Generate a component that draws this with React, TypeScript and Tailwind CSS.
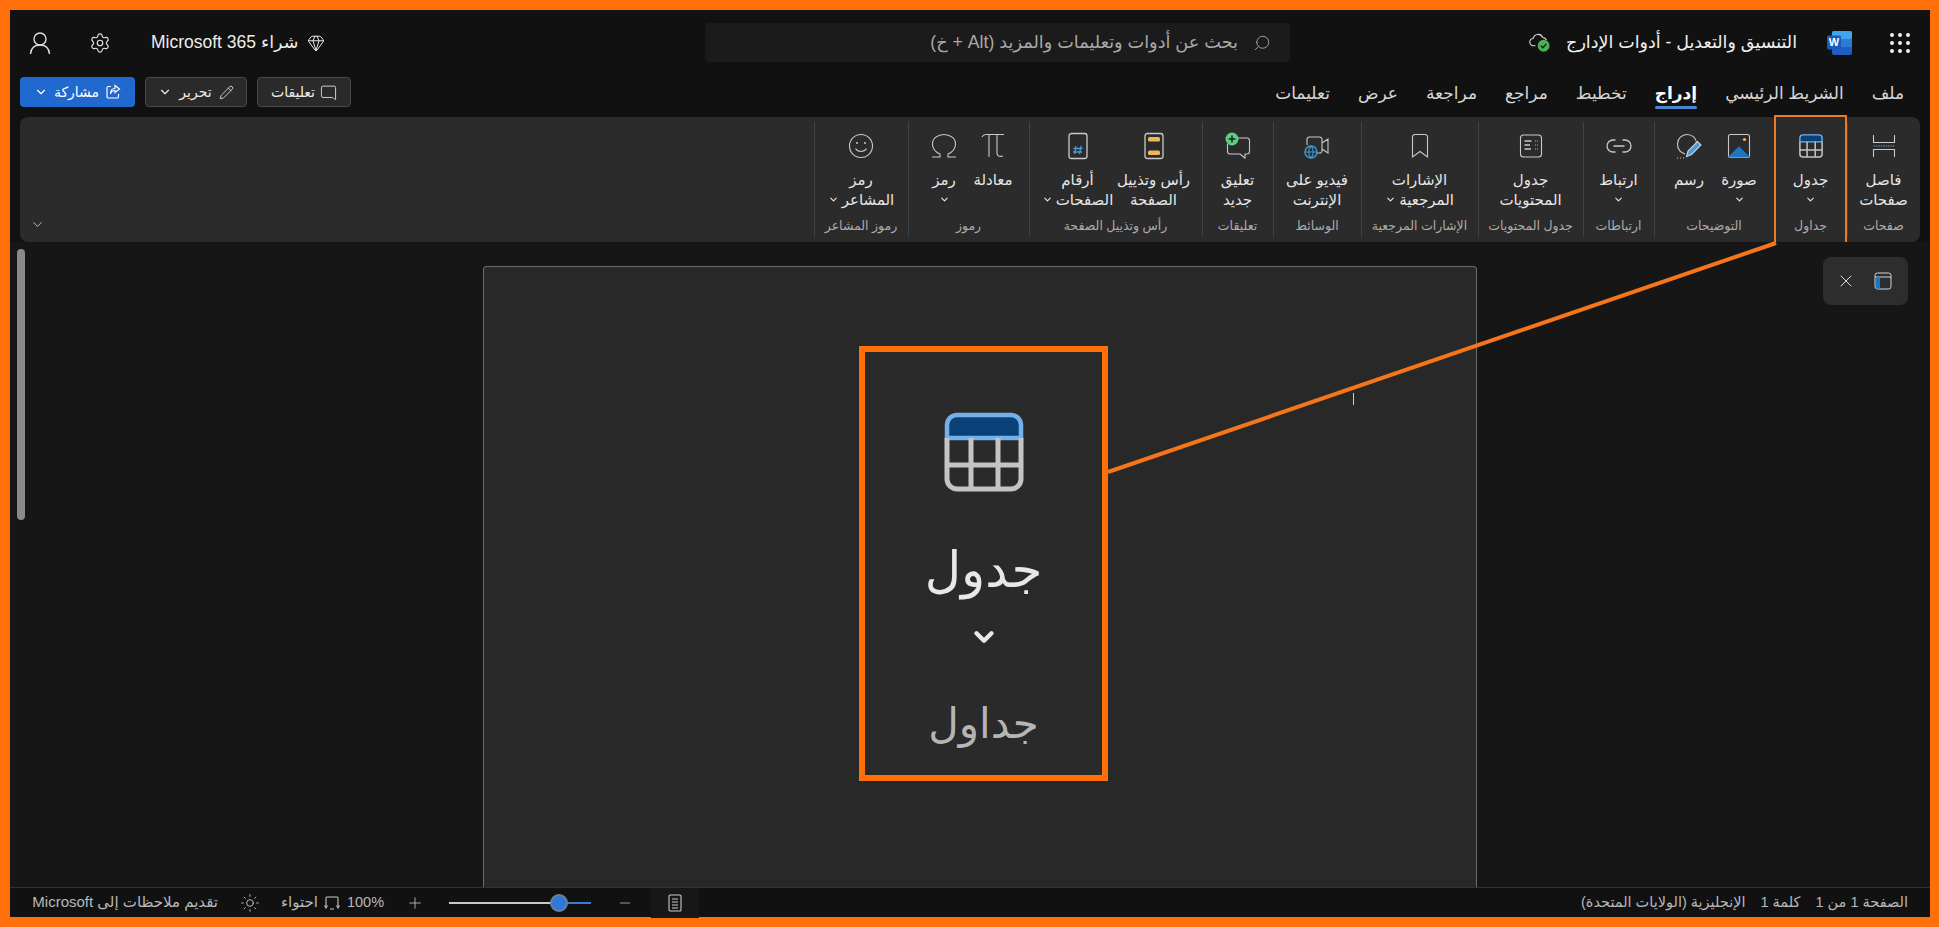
import { ChevronDown, Gem, MessageSquare, Minus, Pencil, Plus, Search, Settings, Sun, X } from "lucide-react";
import type { ReactNode } from "react";

const line = "#c9c9c9";

function TableIcon({ className }: { className: string }) {
  return (
    <svg viewBox="0 0 80 80" className={className} fill="none">
      <path d="M3 26V13a10 10 0 0 1 10-10h54a10 10 0 0 1 10 10v13z" fill="#0b3f78" stroke="#72b1ea" strokeWidth="4.500" />
      <path d="M3 26v41a10 10 0 0 0 10 10h54a10 10 0 0 0 10-10V26M3 53h74M27 26v51M54 26v51" stroke="#c4c4c4" strokeWidth="5" />
    </svg>
  );
}

const Ico = ({ children }: { children: ReactNode }) => (
  <svg viewBox="0 0 28 28" className="h-[28px] w-[28px]" fill="none" stroke={line} strokeWidth="1.1">
    {children}
  </svg>
);

const icons: Record<string, ReactNode> = {
  pagebreak: (
    <Ico>
      <path d="M3.5 3v7.5h21V3M3.5 25v-7.5h21V25" />
      <path d="M3.5 14h21" stroke="#59a5de" strokeDasharray="1.4 1" />
    </Ico>
  ),
  image: (
    <Ico>
      <rect x="3.5" y="2.5" width="21" height="23" rx="2" />
      <path d="M4 25l10-10 10 10z" fill="#1c77c3" stroke="#1c77c3" />
      <circle cx="19.5" cy="7.5" r="1.6" fill="#f0b65c" stroke="none" />
    </Ico>
  ),
  draw: (
    <Ico>
      <path d="M10 22C5.500 20.500 2.500 16.500 2.500 12 2.500 6.500 7 2.500 12 2.500s9.500 3.500 9.500 8.500" />
      <path d="M11.500 24.500l1.500-5.500 9.500-9.500 3.500 3.500-9.500 9.500z" fill="#4d9ad6" stroke="#bcd8ee" />
      <path d="M2 26h1M5 26h1M8 26h1" />
    </Ico>
  ),
  link: (
    <Ico>
      <path d="M10.500 8H8a5.800 5.800 0 0 0 0 12h2.500M17.500 8H20a5.800 5.800 0 0 1 0 12h-2.500M8.500 14h11" strokeWidth="1.300" />
    </Ico>
  ),
  toc: (
    <Ico>
      <rect x="3.500" y="3" width="21" height="22" rx="3" />
      <path d="M7.500 9h7M7.500 13h5.500M7.500 17h6.500" strokeWidth="1.300" />
      <path d="M18 9h3M18 13h3M18 17h3" stroke="#b0b0b0" strokeWidth="1.200" strokeDasharray="1 1" />
    </Ico>
  ),
  bookmark: (
    <Ico>
      <path d="M6.500 25V5a2.500 2.500 0 0 1 2.500-2.500h10A2.500 2.500 0 0 1 21.500 5v20L14 19.500z" />
    </Ico>
  ),
  video: (
    <Ico>
      <path d="M4 13V7.500A2.500 2.500 0 0 1 6.500 5h10A2.500 2.500 0 0 1 19 7.500v11a2.500 2.500 0 0 1-2.500 2.500H14M19 11l6-4v14l-6-4" />
      <circle cx="8" cy="20" r="6" fill="#2b2b2b" stroke="#3e9bdc" strokeWidth="1.400" />
      <path d="M2 20h12M8 14c-3 3-3 9 0 12M8 14c3 3 3 9 0 12" stroke="#3e9bdc" />
    </Ico>
  ),
  comment: (
    <Ico>
      <path d="M9 6h14a2.500 2.500 0 0 1 2.500 2.500v11A2.500 2.500 0 0 1 23 22h-2v4l-5-4H6a2.500 2.500 0 0 1-2.500-2.500V12" />
      <circle cx="8" cy="7" r="6.500" fill="#5ed07c" stroke="none" />
      <path d="M8 3.500v7M4.500 7h7" stroke="#123" strokeWidth="1.500" />
    </Ico>
  ),
  header: (
    <Ico>
      <rect x="5" y="1.500" width="18" height="25" rx="2.500" strokeWidth="1.300" />
      <rect x="8" y="5" width="12" height="4.500" rx="1.500" fill="#f0b65c" stroke="none" />
      <rect x="8" y="18.500" width="12" height="4.500" rx="1.500" fill="#f0b65c" stroke="none" />
    </Ico>
  ),
  pagenum: (
    <Ico>
      <rect x="5" y="1.500" width="18" height="25" rx="2.500" strokeWidth="1.300" />
      <path d="M12 14l-1.500 8M17 14l-1.500 8M9.500 16.500h9M9 20h9" stroke="#4d9ad6" strokeWidth="1.300" />
    </Ico>
  ),
  pi: (
    <Ico>
      <path d="M3 5c1-2 2-2.500 4-2.500h18M10 3v22M18 3v18c0 3 2 4 6 3" />
    </Ico>
  ),
  omega: (
    <Ico>
      <path d="M2 25h8v-3C5.500 20 2.500 16 2.500 12 2.500 6.500 7.500 2.500 14 2.500S25.500 6.500 25.500 12c0 4-3 8-7.500 10v3h8" />
    </Ico>
  ),
  smile: (
    <Ico>
      <circle cx="14" cy="14" r="11.500" />
      <path d="M8.500 16.500c2.500 4 8.500 4 11 0" />
      <circle cx="10" cy="11" r="1" fill={line} stroke="none" />
      <circle cx="18" cy="11" r="1" fill={line} stroke="none" />
    </Ico>
  ),
  table: <TableIcon className="h-[24px] w-[24px]" />,
};

type Item = { icon: string; lines: string[]; caret?: "inline" | "below"; w: number };
type Group = { label: string; w: number; items: Item[]; active?: boolean };

const groups: Group[] = [
  { label: "صفحات", w: 73, items: [{ icon: "pagebreak", lines: ["فاصل", "صفحات"], w: 73 }] },
  { label: "جداول", w: 73, active: true, items: [{ icon: "table", lines: ["جدول"], caret: "below", w: 73 }] },
  {
    label: "التوضيحات",
    w: 120,
    items: [
      { icon: "image", lines: ["صورة"], caret: "below", w: 50 },
      { icon: "draw", lines: ["رسم"], w: 50 },
    ],
  },
  { label: "ارتباطات", w: 71, items: [{ icon: "link", lines: ["ارتباط"], caret: "below", w: 71 }] },
  { label: "جدول المحتويات", w: 105, items: [{ icon: "toc", lines: ["جدول", "المحتويات"], w: 105 }] },
  { label: "الإشارات المرجعية", w: 117, items: [{ icon: "bookmark", lines: ["الإشارات", "المرجعية"], caret: "inline", w: 117 }] },
  { label: "الوسائط", w: 88, items: [{ icon: "video", lines: ["فيديو على", "الإنترنت"], w: 88 }] },
  { label: "تعليقات", w: 71, items: [{ icon: "comment", lines: ["تعليق", "جديد"], w: 71 }] },
  {
    label: "رأس وتذييل الصفحة",
    w: 173,
    items: [
      { icon: "header", lines: ["رأس وتذييل", "الصفحة"], w: 76 },
      { icon: "pagenum", lines: ["أرقام", "الصفحات"], caret: "inline", w: 76 },
    ],
  },
  {
    label: "رموز",
    w: 121,
    items: [
      { icon: "pi", lines: ["معادلة"], w: 49 },
      { icon: "omega", lines: ["رمز"], caret: "below", w: 49 },
    ],
  },
  { label: "رموز المشاعر", w: 94, items: [{ icon: "smile", lines: ["رمز", "المشاعر"], caret: "inline", w: 94 }] },
];

function RibbonGroup({ group }: { group: Group }) {
  return (
    <div style={{ width: group.w }} className="relative flex h-full shrink-0 flex-col items-center">
      <div className="flex w-full flex-1 justify-center pt-[15px]">
        {group.items.map((it) => (
          <div key={it.icon} style={{ width: it.w }} className="flex shrink-0 flex-col items-center">
            <div className="flex h-[28px] items-center justify-center">{icons[it.icon]}</div>
            <div className="mt-[10px] flex flex-col items-center whitespace-nowrap text-[15px] leading-[19.500px] text-[#e6e6e6]">
              {it.lines.map((l, i) => (
                <div key={l} className="flex items-center gap-[3px]">
                  {l}
                  {it.caret === "inline" && i === it.lines.length - 1 && <ChevronDown size={11} strokeWidth={2.5} />}
                </div>
              ))}
              {it.caret === "below" && (
                <div className="flex h-[19px] items-center">
                  <ChevronDown size={11} strokeWidth={2.5} />
                </div>
              )}
            </div>
          </div>
        ))}
      </div>
      <div className="mb-[8px] whitespace-nowrap text-[12.5px] leading-[16px] text-[#ababab]">{group.label}</div>
      {!group.active && <div className="absolute bottom-[5px] left-0 top-[5px] w-px bg-[#424242]" />}
      {group.active && <div className="absolute -inset-y-[2px] inset-x-0 border-2 border-[#ee7a22]" />}
    </div>
  );
}

function TopBar() {
  return (
    <div className="flex h-[57px] shrink-0 items-center pt-[8px]">
      <div className="flex w-[695px] shrink-0 items-center">
        <svg viewBox="0 0 24 24" className="ml-[18px] h-[24px] w-[24px]" fill="none" stroke="#e0e0e0" strokeWidth="1.400">
          <circle cx="12" cy="8" r="6" />
          <path d="M2.500 23c.5-6 4-9 9.500-9s9 3 9.500 9" />
        </svg>
        <Settings size={22} strokeWidth={1.3} color="#e0e0e0" className="ml-[37px]" />
        <div className="ml-[40px] flex items-center gap-[9px] text-[17.500px] text-[#ececec]">
          <span dir="rtl">شراء Microsoft 365</span>
          <Gem size={18} strokeWidth={1.3} />
        </div>
      </div>
      <div dir="rtl" className="flex h-[39px] w-[585px] shrink-0 items-center gap-[15px] rounded-[4px] bg-[#1b1b1b] pr-[19px] text-[17.700px] text-[#a8a8a8]">
        <Search size={18} strokeWidth={1.2} className="-scale-x-100" />
        <span>بحث عن أدوات وتعليمات والمزيد (Alt + خ)</span>
      </div>
      <div className="flex flex-1 items-center justify-end">
        <svg viewBox="0 0 26 22" className="h-[20px] w-[24px]" fill="none">
          <path d="M8 14H6a4 4 0 0 1-.5-8A5.500 5.500 0 0 1 16 5a4.500 4.500 0 0 1 4 3" stroke="#d8d8d8" strokeWidth="1.200" />
          <circle cx="17" cy="14" r="6.500" fill="#4caf50" />
          <path d="M14 14l2.200 2.200L20 12" stroke="#111" strokeWidth="1.400" />
        </svg>
        <span dir="rtl" className="ml-[14px] text-[17.500px] text-[#f0f0f0]">
          التنسيق والتعديل - أدوات الإدارج
        </span>
        <svg viewBox="0 0 26 26" className="ml-[30px] h-[26px] w-[26px]">
          <rect x="5" y="1" width="20" height="24" rx="2" fill="#1f5fc0" />
          <rect x="5" y="1" width="20" height="8" rx="2" fill="#41a5ee" />
          <rect x="5" y="9" width="20" height="8" fill="#2b7cd3" />
          <rect x="0" y="5.500" width="14" height="14" rx="1.500" fill="#185abd" />
          <text x="7" y="16" textAnchor="middle" fontSize="11" fontWeight="700" fill="#fff" fontFamily="Liberation Sans">
            W
          </text>
        </svg>
        <div className="ml-[37px] mr-[20px] grid grid-cols-3 gap-[4px]">
          {Array.from({ length: 9 }).map((_, i) => (
            <span key={i} className="h-[4px] w-[4px] rounded-full bg-[#efefef]" />
          ))}
        </div>
      </div>
    </div>
  );
}

function ActionRow() {
  const tabs = ["ملف", "الشريط الرئيسي", "إدراج", "تخطيط", "مراجع", "مراجعة", "عرض", "تعليمات"];
  return (
    <div className="flex h-[50px] shrink-0 items-start justify-between px-[10px] pt-[10px]">
      <div className="flex gap-[10px] text-[14px]">
        <button className="flex h-[30px] w-[115px] items-center justify-center gap-[6px] rounded-[4px] bg-[#2168cf] text-white">
          <ChevronDown size={14} />
          <span>مشاركة</span>
          <svg viewBox="0 0 16 16" className="h-[16px] w-[16px]" fill="none" stroke="#fff" strokeWidth="1.200">
            <path d="M6 2.500H3.500a1.500 1.500 0 0 0-1.500 1.500v8.500A1.500 1.500 0 0 0 3.500 14H12a1.500 1.500 0 0 0 1.500-1.500V10" />
            <path d="M10 1.500l4.500 3.500-4.500 3.500V6.500c-2.500 0-4 1-4.500 3.500 0-3.500 1.500-5.500 4.500-5.500z" />
          </svg>
        </button>
        <button className="flex h-[30px] w-[102px] items-center justify-center gap-[7px] rounded-[4px] border border-[#4a4a4a] bg-[#2a2a2a] text-[#ececec]">
          <ChevronDown size={14} />
          <span>تحرير</span>
          <Pencil size={15} strokeWidth={1.3} />
        </button>
        <button className="flex h-[30px] w-[94px] items-center justify-center gap-[5px] rounded-[4px] border border-[#4a4a4a] bg-[#2a2a2a] text-[#ececec]">
          <span>تعليقات</span>
          <MessageSquare size={17} strokeWidth={1.2} className="-scale-x-100" />
        </button>
      </div>
      <div dir="rtl" className="mr-[16px] mt-[5px] flex gap-[28px] text-[17px] leading-[24px] text-[#d6d6d6]">
        {tabs.map((t) => (
          <div key={t} className={t === "إدراج" ? "relative pb-[3px] font-bold text-white" : "pb-[3px]"}>
            {t}
            {t === "إدراج" && <div className="absolute bottom-0 left-0 right-0 h-[3px] rounded bg-[#4a86d4]" />}
          </div>
        ))}
      </div>
    </div>
  );
}

function Ribbon() {
  return (
    <div dir="rtl" className="relative mx-[10px] flex h-[125px] shrink-0 rounded-[8px] bg-[#2b2b2b]">
      {groups.map((g) => (
        <RibbonGroup key={g.label} group={g} />
      ))}
      <ChevronDown size={15} strokeWidth={1.3} color="#e0e0e0" className="absolute bottom-[10px] left-[10px]" />
    </div>
  );
}

function Canvas() {
  return (
    <div className="relative flex min-h-0 flex-1 justify-center overflow-hidden bg-[#161616] pt-[24px]">
      <div className="absolute left-[7px] top-[7px] h-[271px] w-[8px] rounded-full bg-[#8a8a8a]" />
      <div className="relative ml-[20px] h-full w-[994px] rounded-t-[4px] border border-b-0 border-[#6b6b6b] bg-[#282828]">
        <div className="absolute left-[869px] top-[126px] h-[12px] w-px bg-[#d0d0d0]" />
      </div>
      <div className="absolute left-[1813px] top-[15px] flex h-[48px] w-[85px] items-center justify-center gap-[18px] rounded-[8px] bg-[#2d2d2d] pr-[4px]">
        <X size={20} strokeWidth={1.2} color="#dcdcdc" />
        <svg viewBox="0 0 18 18" className="h-[18px] w-[18px]" fill="none">
          <rect x="1" y="1" width="16" height="16" rx="2.500" stroke="#cfd8e0" />
          <path d="M1 5h16" stroke="#cfd8e0" />
          <rect x="2" y="5.500" width="4" height="11" fill="#1c77c3" />
        </svg>
      </div>
      <div className="absolute left-[849px] top-[104px] flex h-[435px] w-[249px] flex-col items-center border-[6px] border-[#ff6f0a] bg-[#2a2a2a]">
        <TableIcon className="mt-[60px] h-[80px] w-[80px]" />
        <div className="mt-[43px] text-[50px] leading-[70px] text-[#e8e8e8]">جدول</div>
        <ChevronDown size={30} strokeWidth={3.5} color="#e8e8e8" className="mt-[17px]" />
        <div className="mt-[41px] text-[42px] leading-[62px] text-[#b5b5b5]">جداول</div>
      </div>
    </div>
  );
}

function StatusBar() {
  return (
    <div className="flex h-[30px] shrink-0 items-center border-t border-[#333] bg-[#111] text-[15px] text-[#b9b9b9]">
      <span dir="rtl" className="ml-[21px] w-[187px] whitespace-nowrap">
        تقديم ملاحظات إلى Microsoft
      </span>
      <Sun size={20} strokeWidth={1.2} className="ml-[22px]" />
      <span className="ml-[21px]">احتواء</span>
      <svg viewBox="0 0 16 16" className="ml-[6px] h-[16px] w-[16px]" fill="none" stroke="#c9c9c9" strokeWidth="1.100">
        <path d="M2 11V3a1 1 0 0 1 1-1h10a1 1 0 0 1 1 1v8M0.500 10.500L2 13l1.500-2.500M12.500 10.500L14 13l1.500-2.500M6 14h4" />
      </svg>
      <span className="ml-[7px] w-[38px] text-[14.5px]">100%</span>
      <Plus size={18} strokeWidth={1.2} className="ml-[21px]" />
      <div className="relative ml-[25px] flex h-[2px] w-[142px]">
        <div className="h-full w-[110px] bg-[#c9c9c9]" />
        <div className="h-full flex-1 bg-[#3b7bd8]" />
        <div className="absolute left-[101px] top-[-8px] h-[18px] w-[18px] rounded-full border-2 border-[#6d7f96] bg-[#2f77dc]" />
      </div>
      <Minus size={16} strokeWidth={1.2} className="ml-[26px]" />
      <div className="ml-[18px] flex h-[30px] w-[48px] items-center justify-center bg-[#171717]">
        <svg viewBox="0 0 14 18" className="h-[18px] w-[14px]" fill="none" stroke="#c9c9c9" strokeWidth="1.100">
          <rect x="1" y="1" width="12" height="16" rx="1" />
          <path d="M4 5h6M4 8h6M4 11h6M4 14h6" />
        </svg>
      </div>
      <div dir="rtl" className="mr-[22px] flex flex-1 gap-[15px] whitespace-nowrap text-[14.5px]">
        <span>الصفحة 1 من 1</span>
        <span>كلمة 1</span>
        <span>الإنجليزية (الولايات المتحدة)</span>
      </div>
    </div>
  );
}

export default function App() {
  return (
    <div className="relative flex h-screen w-full flex-col overflow-hidden bg-[#ff6f0a] pb-[10px] pl-[10px] pr-[9px] pt-[10px] font-['Liberation_Sans','DejaVu_Sans',sans-serif]">
      <div className="flex min-h-0 flex-1 flex-col bg-[#111]">
        <TopBar />
        <ActionRow />
        <Ribbon />
        <Canvas />
        <StatusBar />
      </div>
      <svg viewBox="0 0 1939 927" className="pointer-events-none absolute inset-0 h-full w-full">
        <line x1="1108" y1="472" x2="1776" y2="243" stroke="#f5761a" strokeWidth="4" />
      </svg>
    </div>
  );
}
